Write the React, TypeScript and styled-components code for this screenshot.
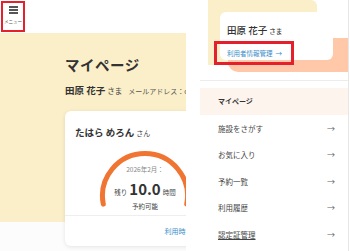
import styled, { createGlobalStyle } from "styled-components"

const GlobalStyle = createGlobalStyle`
  html, body {
    margin: 0;
    padding: 0;
    background: #fff;
  }
  body {
    font-family: "Noto Sans CJK JP", "Noto Sans", sans-serif;
    color: #333;
    overflow: hidden;
  }
`

const Page = styled.div`
  display: flex;
  width: 350px;
  height: 251px;
  overflow: hidden;
`

/* left screenshot: the my page view */

const LeftShot = styled.section`
  flex: none;
  width: 186px;
  overflow: hidden;
  background: linear-gradient(#fff 0 33px, #fbefc9 33px 222px, #fcfcfc 222px);
`

const TopBar = styled.header`
  height: 33px;
  box-sizing: border-box;
  padding: 1px 0 0 1px;
`

const MenuButton = styled.button`
  width: 24px;
  height: 31px;
  box-sizing: border-box;
  border: 2px solid #e3202c;
  background: #fff;
  padding: 3px 0 0;
  display: flex;
  flex-direction: column;
  align-items: center;
  font-family: inherit;
`

const Burger = styled.span`
  display: block;
  width: 9px;
  height: 1.5px;
  background: #555;
  box-shadow: 0 3px 0 #555, 0 6px 0 #555;
`

const MenuLabel = styled.span`
  margin-top: 11px;
  font-size: 4.5px;
  line-height: 5px;
  color: #555;
  white-space: nowrap;
`

const Hero = styled.div`
  padding: 22px 0 0 65px;
`

const PageTitle = styled.h1`
  margin: 0;
  font-size: 14.5px;
  line-height: 20px;
  font-weight: 700;
  color: #333;
  letter-spacing: 0.5px;
`

const UserRow = styled.div`
  margin-top: 9px;
  display: flex;
  align-items: baseline;
  line-height: 12px;
  white-space: nowrap;
`

const UserName = styled.span`
  font-size: 9.5px;
  font-weight: 700;
  color: #333;
`

const Honorific = styled.span<{ $size: number }>`
  margin-left: 2px;
  font-size: ${(p) => p.$size}px;
  color: #444;
`

const Email = styled.span`
  margin-left: 6px;
  font-size: 7px;
  color: #555;
`

const MemberCard = styled.article`
  margin-top: 14px;
  width: 160px;
  height: 135px;
  background: #fff;
  border-radius: 6px;
  box-shadow: 0 1px 4px rgba(0, 0, 0, 0.1);
  display: flex;
  flex-direction: column;
`

const CardHead = styled.div`
  height: 30px;
  box-sizing: border-box;
  padding: 12px 0 0 10px;
  line-height: 12px;
  white-space: nowrap;
`

const ChildName = styled.span`
  font-size: 9.5px;
  font-weight: 700;
  color: #333;
`

const Gauge = styled.div`
  display: grid;
  height: 74px;

  & > * {
    grid-area: 1 / 1;
  }
`

const GaugeText = styled.div`
  display: flex;
  flex-direction: column;
  align-items: center;
  padding-top: 24px;
  white-space: nowrap;
`

const Month = styled.span`
  font-size: 6.5px;
  line-height: 8px;
  color: #888;
`

const Remain = styled.div`
  margin-top: 7px;
  display: flex;
  align-items: baseline;
  gap: 2px;
  line-height: 18px;
  font-size: 6.5px;
  color: #444;
`

const Hours = styled.strong`
  font-size: 15px;
  font-weight: 700;
  color: #333;
`

const Available = styled.span`
  margin-top: 1px;
  font-size: 6.5px;
  line-height: 8px;
  color: #444;
`

const CardFoot = styled.div`
  flex: 1;
  border-top: 1px solid #eee;
  display: flex;
  align-items: center;
  justify-content: flex-end;
  padding-right: 10px;
  font-size: 7px;
  color: #3a8ec9;
  white-space: nowrap;
`

/* right screenshot: the drawer menu */

const RightShot = styled.aside`
  flex: none;
  margin-left: 14px;
  width: 148px;
  border-right: 1px solid #e6e6e6;
  background: #fff;
`

const ProfileArea = styled.div`
  position: relative;
  height: 81px;
  box-sizing: border-box;
  padding: 12px 0 0 20px;
  border-bottom: 1px solid #ececec;

  &::before {
    content: "";
    position: absolute;
    left: 8px;
    top: 0;
    width: 109px;
    height: 65px;
    background: #fbefc9;
    border-radius: 0 6px 0 0;
  }

  &::after {
    content: "";
    position: absolute;
    left: 28px;
    right: 0;
    top: 38px;
    height: 34px;
    background: #ffc8a8;
    border-radius: 0 0 0 10px;
  }
`

const ProfileCard = styled.div`
  position: relative;
  z-index: 2;
  width: 113px;
  height: 48px;
  box-sizing: border-box;
  padding: 12px 0 0 7px;
  background: #fff;
  border-radius: 6px;
`

const ProfileName = styled.div`
  line-height: 12px;
  white-space: nowrap;
  font-size: 9.5px;
  font-weight: 500;
  color: #333;
`

const ProfileLink = styled.a`
  margin: -1px 0 0 -13px;
  display: inline-flex;
  align-items: center;
  gap: 3px;
  width: 80px;
  height: 24px;
  box-sizing: border-box;
  padding: 0 10px;
  border: 3px solid #e3202c;
  font-size: 6.5px;
  color: #3a8ec9;
  text-decoration: none;
  white-space: nowrap;
`

const SectionLabel = styled.div`
  margin-top: 7px;
  height: 27px;
  line-height: 27px;
  padding-left: 18px;
  background: #fdf4ee;
  font-size: 7px;
  font-weight: 700;
  color: #333;
`

const MenuList = styled.ul`
  margin: 0;
  padding: 0;
  list-style: none;
`

const MenuItem = styled.li<{ $underline?: boolean }>`
  height: 26.5px;
  display: flex;
  align-items: center;
  justify-content: space-between;
  padding: 0 13px 0 18px;
  font-size: 7.5px;
  color: #444;

  span:first-child {
    text-decoration: ${(p) => (p.$underline ? "underline" : "none")};
  }
`

const Arrow = styled.span`
  font-size: 8px;
  color: #666;
`

const menu = ["施設をさがす", "お気に入り", "予約一覧", "利用履歴", "認定証管理"]

function GaugeArc() {
  const cx = 80
  const cy = 55
  const r = 42.5
  const a = (11 * Math.PI) / 180
  const x1 = cx - r * Math.cos(a)
  const x2 = cx + r * Math.cos(a)
  const y = cy + r * Math.sin(a)
  return (
    <svg width="160" height="74" viewBox="0 0 160 74" aria-hidden>
      <path
        d={`M ${x1} ${y} A ${r} ${r} 0 1 1 ${x2} ${y}`}
        fill="none"
        stroke="#f07532"
        strokeWidth="5"
        strokeLinecap="round"
      />
    </svg>
  )
}

export default function App() {
  return (
    <>
      <GlobalStyle />
      <Page>
        <LeftShot>
          <TopBar>
            <MenuButton type="button">
              <Burger />
              <MenuLabel>メニュー</MenuLabel>
            </MenuButton>
          </TopBar>
          <Hero>
            <PageTitle>マイページ</PageTitle>
            <UserRow>
              <UserName>田原 花子</UserName>
              <Honorific $size={7.5}>さま</Honorific>
              <Email>メールアドレス：coco@example.jp</Email>
            </UserRow>
            <MemberCard>
              <CardHead>
                <ChildName>たはら めろん</ChildName>
                <Honorific $size={7}>さん</Honorific>
              </CardHead>
              <Gauge>
                <GaugeArc />
                <GaugeText>
                  <Month>2026年2月：</Month>
                  <Remain>
                    残り<Hours>10.0</Hours>時間
                  </Remain>
                  <Available>予約可能</Available>
                </GaugeText>
              </Gauge>
              <CardFoot>利用時間詳細 →</CardFoot>
            </MemberCard>
          </Hero>
        </LeftShot>

        <RightShot>
          <ProfileArea>
            <ProfileCard>
              <ProfileName>
                田原 花子<Honorific $size={6.5}>さま</Honorific>
              </ProfileName>
              <ProfileLink href="#">
                利用者情報管理 <span>→</span>
              </ProfileLink>
            </ProfileCard>
          </ProfileArea>
          <SectionLabel>マイページ</SectionLabel>
          <MenuList>
            {menu.map((item, i) => (
              <MenuItem key={item} $underline={i === menu.length - 1}>
                <span>{item}</span>
                <Arrow>→</Arrow>
              </MenuItem>
            ))}
          </MenuList>
        </RightShot>
      </Page>
    </>
  )
}
